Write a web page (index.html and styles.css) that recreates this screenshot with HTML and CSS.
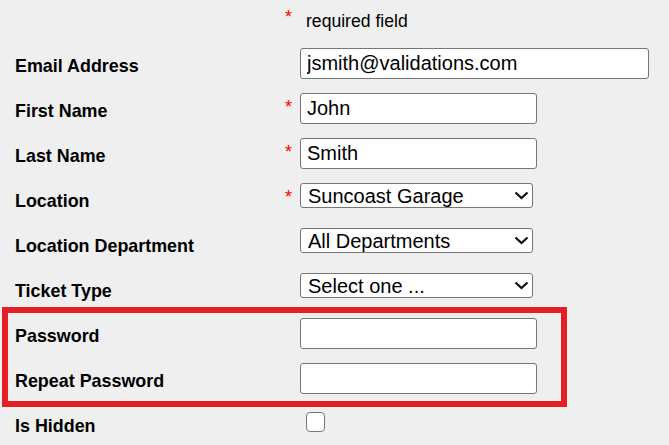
FILE: index.html
```html
<!DOCTYPE html>
<html lang="en">
<head>
<meta charset="utf-8">
<title>User form</title>
<link rel="stylesheet" href="styles.css">
</head>
<body>
<form class="form">
  <div class="row">
    <div class="label"></div>
    <div class="req">*</div>
    <div class="field note">required field</div>
  </div>
  <div class="row">
    <div class="label">Email Address</div>
    <div class="req"></div>
    <div class="field"><input class="text wide" type="text" value="jsmith@validations.com"></div>
  </div>
  <div class="row">
    <div class="label">First Name</div>
    <div class="req">*</div>
    <div class="field"><input class="text" type="text" value="John"></div>
  </div>
  <div class="row">
    <div class="label">Last Name</div>
    <div class="req">*</div>
    <div class="field"><input class="text" type="text" value="Smith"></div>
  </div>
  <div class="row">
    <div class="label">Location</div>
    <div class="req">*</div>
    <div class="field">
      <div class="select-wrap">
        <select class="select"><option>Suncoast Garage</option></select>
        <svg class="chev" width="15" height="9" viewBox="0 0 15 9"><polyline points="1.5,1.5 7.5,7 13.5,1.5" fill="none" stroke="#111" stroke-width="2.3"/></svg>
      </div>
    </div>
  </div>
  <div class="row">
    <div class="label">Location Department</div>
    <div class="req"></div>
    <div class="field">
      <div class="select-wrap">
        <select class="select"><option>All Departments</option></select>
        <svg class="chev" width="15" height="9" viewBox="0 0 15 9"><polyline points="1.5,1.5 7.5,7 13.5,1.5" fill="none" stroke="#111" stroke-width="2.3"/></svg>
      </div>
    </div>
  </div>
  <div class="row">
    <div class="label">Ticket Type</div>
    <div class="req"></div>
    <div class="field">
      <div class="select-wrap">
        <select class="select"><option>Select one ...</option></select>
        <svg class="chev" width="15" height="9" viewBox="0 0 15 9"><polyline points="1.5,1.5 7.5,7 13.5,1.5" fill="none" stroke="#111" stroke-width="2.3"/></svg>
      </div>
    </div>
  </div>
  <div class="highlight">
    <div class="row">
      <div class="label">Password</div>
      <div class="req"></div>
      <div class="field"><input class="text" type="password"></div>
    </div>
    <div class="row">
      <div class="label">Repeat Password</div>
      <div class="req"></div>
      <div class="field"><input class="text" type="password"></div>
    </div>
  </div>
  <div class="row">
    <div class="label">Is Hidden</div>
    <div class="req"></div>
    <div class="field check-field"><input class="check" type="checkbox"></div>
  </div>
</form>
</body>
</html>
```

FILE: styles.css
```css
html, body {
  margin: 0;
  padding: 0;
  height: 445px;
  overflow: hidden;
  background: #efefef;
}

body {
  font-family: "Liberation Sans", Arial, sans-serif;
  color: #000;
}

.form {
  display: flex;
  flex-direction: column;
}

.row {
  display: flex;
  height: 45px;
  padding-left: 15px;
}

.label {
  width: 270px;
  flex: none;
  font-size: 17.9px;
  line-height: 20px;
  font-weight: bold;
  padding-top: 11px;
  white-space: nowrap;
}

.req {
  width: 15px;
  flex: none;
  color: #ff0000;
  font-size: 18px;
  line-height: 20px;
  padding-top: 7px;
}

.field {
  flex: 1;
  padding-top: 3px;
}

.note {
  font-size: 17.6px;
  line-height: 20px;
  padding-top: 11px;
  padding-left: 6px;
}

.text {
  box-sizing: border-box;
  width: 237px;
  height: 31px;
  margin: 0;
  border: 1px solid #767676;
  border-radius: 3px;
  background: #fff;
  padding: 0 6px;
  font-family: "Liberation Sans", Arial, sans-serif;
  font-size: 20px;
  color: #000;
}

.text.wide {
  width: 349px;
}

.select-wrap {
  position: relative;
  display: inline-block;
}

.select {
  box-sizing: border-box;
  width: 233px;
  height: 25px;
  margin: 0;
  appearance: none;
  -webkit-appearance: none;
  border: 1px solid #767676;
  border-radius: 3px;
  background: #fff;
  padding: 1px 0 0 7px;
  font-family: "Liberation Sans", Arial, sans-serif;
  font-size: 20px;
  line-height: 22px;
  color: #000;
  display: block;
}

.chev {
  position: absolute;
  left: 214px;
  top: 8px;
  pointer-events: none;
}

.check-field {
  padding-top: 7px;
  padding-left: 6px;
}

.check {
  appearance: none;
  -webkit-appearance: none;
  box-sizing: border-box;
  width: 19px;
  height: 20px;
  margin: 0;
  border: 1.5px solid #767676;
  border-radius: 4px;
  background: #fff;
  display: block;
}

.highlight {
  position: relative;
}

.highlight::after {
  content: "";
  position: absolute;
  left: 2px;
  right: 102px;
  top: -8px;
  bottom: -2px;
  border: 6px solid #e41e25;
  pointer-events: none;
}
```
